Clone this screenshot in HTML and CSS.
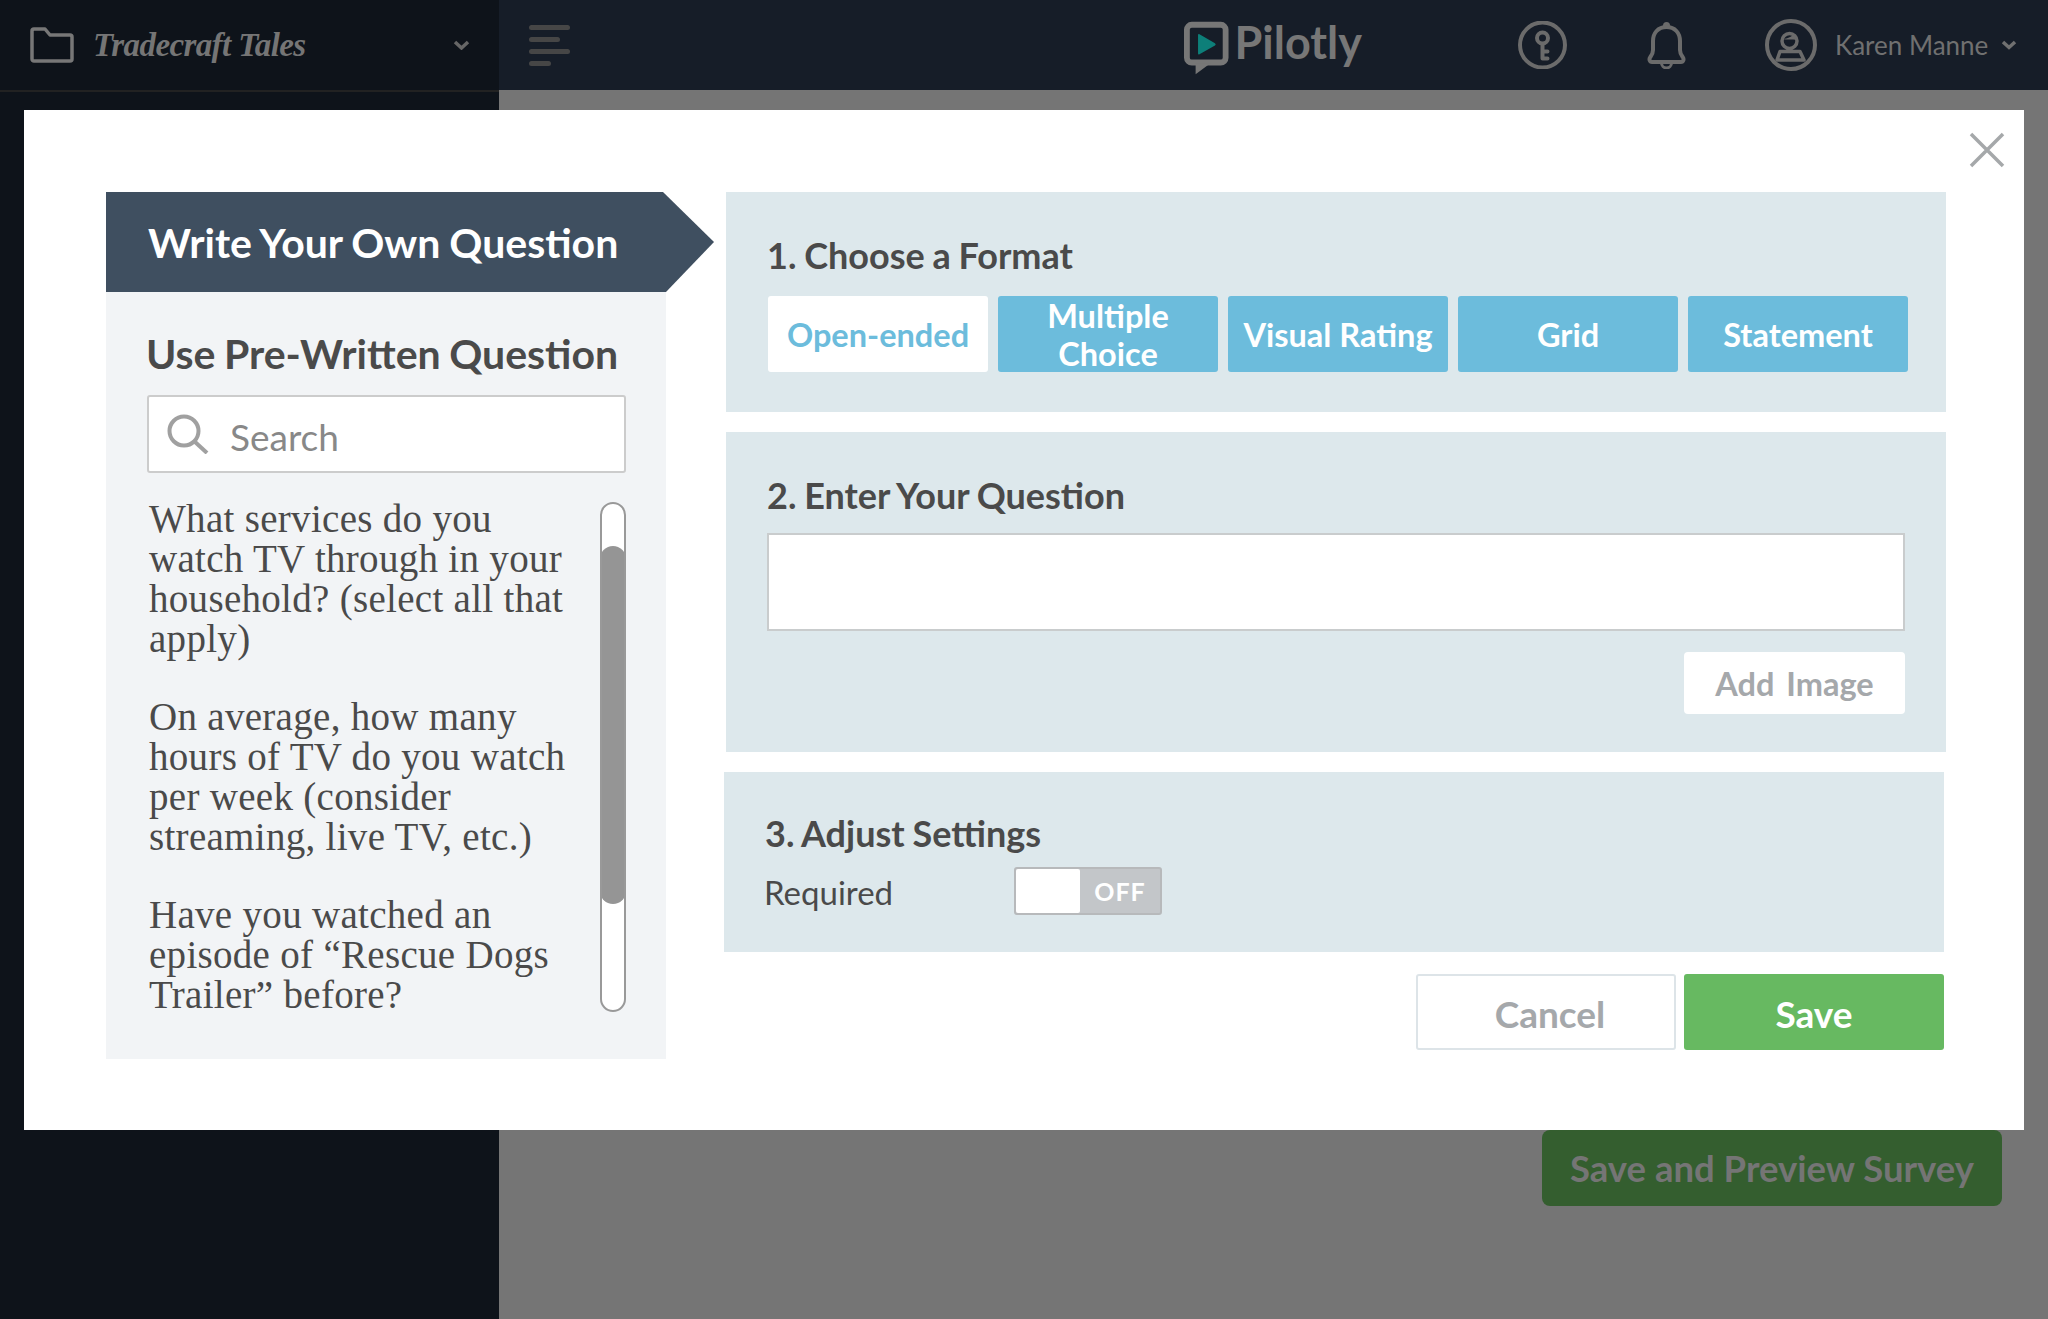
FILE: index.html
```html
<!doctype html>
<html>
<head>
  <meta charset="utf-8"/>
  <title>Pilotly</title>
  <link rel="stylesheet" href="styles.css">
</head>
<body>
  <div class="page">
    <aside class="sidebar">
      <div class="project">
        <svg class="folder" width="44" height="36" viewBox="0 0 44 36"><path d="M2 4a2 2 0 0 1 2-2h11l5 6h20a2 2 0 0 1 2 2v22a2 2 0 0 1-2 2H4a2 2 0 0 1-2-2z" fill="none" stroke="#777" stroke-width="3.500" stroke-linejoin="round"/></svg>
        <span class="project-name">Tradecraft Tales</span>
        <svg class="chevron" width="17" height="10" viewBox="0 0 17 10"><path d="M2 2l6.500 6L15 2" fill="none" stroke="#666" stroke-width="3.500"/></svg>
      </div>
    </aside>
    <div class="main">
      <header class="topbar">
        <div class="menu-icon"><i></i><i class="m2"></i><i></i><i class="m4"></i></div>
        <div class="logo">
          <svg width="46" height="54" viewBox="0 0 46 54"><path d="M8 3h30a5 5 0 0 1 5 5v29a5 5 0 0 1-5 5H8a5 5 0 0 1-5-5V8a5 5 0 0 1 5-5z" fill="none" stroke="#777" stroke-width="6"/><path d="M12 43v11l15-11z" fill="#777"/><path d="M14.500 13.500a1 1 0 0 1 1.500-.8L32 22a1.500 1.500 0 0 1 0 2.400L16 33.500a1 1 0 0 1-1.500-.8z" fill="#0d7f79"/></svg>
          <span class="logo-text">Pilotly</span>
        </div>
        <div class="top-right">
          <svg class="ic-key" width="50" height="48" viewBox="0 0 50 48"><circle cx="24.500" cy="24" r="22.500" fill="none" stroke="#6b6b6b" stroke-width="4"/><circle cx="24.500" cy="17" r="5.500" fill="none" stroke="#6b6b6b" stroke-width="4"/><path d="M24.500 23v14.500h5M24.500 30.500h5" fill="none" stroke="#6b6b6b" stroke-width="4" stroke-linecap="round" stroke-linejoin="round"/></svg>
          <svg class="ic-bell" width="40" height="48" viewBox="0 0 40 48"><path d="M19.500 6C11 6 6 12 6 20v9c0 4-2 6-3 7.500S2.500 41 5 41h29c2.500 0 3-3 2-4.500S33 33 33 29v-9C33 12 28 6 19.500 6z" fill="none" stroke="#6b6b6b" stroke-width="4" stroke-linejoin="round"/><circle cx="19.500" cy="4.500" r="3.500" fill="#6b6b6b"/><path d="M14.500 42a5 5 0 0 0 10 0" fill="none" stroke="#6b6b6b" stroke-width="3"/></svg>
          <svg class="ic-user" width="52" height="52" viewBox="0 0 52 52"><circle cx="26" cy="26" r="24" fill="none" stroke="#6b6b6b" stroke-width="4"/><circle cx="24.500" cy="22" r="7.500" fill="none" stroke="#6b6b6b" stroke-width="3.500"/><path d="M17 20c3 0 9-1 11.500-5 2 1 3.500 3 3.500 6-5-1-10 0-15-1z" fill="#6b6b6b"/><path d="M15 32.500h20L39 41H12z" fill="none" stroke="#6b6b6b" stroke-width="3.500" stroke-linejoin="round"/></svg>
          <span class="user-name">Karen Manne</span>
          <svg class="chevron" width="16" height="10" viewBox="0 0 16 10"><path d="M2 2l6 5.500L14 2" fill="none" stroke="#707070" stroke-width="3.500"/></svg>
        </div>
      </header>
      <div class="content">
        <div class="preview-btn">Save and Preview Survey</div>
      </div>
    </div>
  </div>

  <div class="modal">
    <svg class="close" width="36" height="36" viewBox="0 0 36 36"><path d="M2 2l32 32M34 2L2 34" fill="none" stroke="#a5a8aa" stroke-width="3.500"/></svg>
    <div class="left-col">
      <div class="banner">Write Your Own Question</div>
      <div class="library">
        <h2 class="library-title">Use Pre-Written Question</h2>
        <div class="search">
          <svg width="42" height="40" viewBox="0 0 42 40"><circle cx="17" cy="17" r="14.500" fill="none" stroke="#a0a0a0" stroke-width="4"/><path d="M27 27l13 12" fill="none" stroke="#a0a0a0" stroke-width="4"/></svg>
          <span>Search</span>
        </div>
        <div class="list-wrap">
          <div class="question-list">
            <p>What services do you watch TV through in your household? (select all that apply)</p>
            <p>On average, how many hours of TV do you watch per week (consider streaming, live TV, etc.)</p>
            <p>Have you watched an episode of “Rescue Dogs Trailer” before?</p>
          </div>
          <div class="scrollbar"><div class="thumb"></div></div>
        </div>
      </div>
    </div>
    <div class="right-col">
      <section class="step step-format">
        <h3>1. Choose a Format</h3>
        <div class="formats">
          <div class="format active">Open-ended</div>
          <div class="format">Multiple Choice</div>
          <div class="format">Visual Rating</div>
          <div class="format">Grid</div>
          <div class="format">Statement</div>
        </div>
      </section>
      <section class="step step-question">
        <h3>2. Enter Your Question</h3>
        <div class="question-input"></div>
        <div class="add-image">Add Image</div>
      </section>
      <section class="step step-settings">
        <h3>3. Adjust Settings</h3>
        <div class="setting">
          <span class="setting-label">Required</span>
          <div class="toggle"><div class="knob"></div><div class="toggle-off">OFF</div></div>
        </div>
      </section>
      <div class="actions">
        <div class="btn btn-cancel">Cancel</div>
        <div class="btn btn-save">Save</div>
      </div>
    </div>
  </div>
</body>
</html>
```

FILE: styles.css
```css
html, body {
  margin: 0;
  width: 100%;
  height: 100%;
  overflow: hidden;
  font-family: "Lato", "Liberation Sans", sans-serif;
  color: #4a4a4a;
}
h2, h3, p {
  margin: 0;
}
.page {
  display: flex;
  height: 1319px;
}
.sidebar {
  width: 499px;
  flex: none;
  background: #0e131a;
}
.project {
  height: 90px;
  border-bottom: 2px solid #222;
  padding: 0 29px 0 30px;
  display: flex;
  align-items: center;
}
.project-name {
  margin-left: 19px;
  flex: 1;
  font-family: "Liberation Serif", serif;
  font-style: italic;
  font-weight: 700;
  font-size: 33px;
  letter-spacing: -.6px;
  color: #757575;
}
.main {
  flex: 1;
  display: flex;
  flex-direction: column;
  background: #757575;
}
.topbar {
  height: 90px;
  flex: none;
  background: #161d28;
  display: flex;
  align-items: center;
  padding-left: 30px;
}
.menu-icon {
  width: 41px;
  display: flex;
  flex-direction: column;
  gap: 7px;
}
.menu-icon i {
  display: block;
  height: 5px;
  width: 41px;
  border-radius: 3px;
  background: #464646;
}
.menu-icon .m2 {
  width: 31px;
}
.menu-icon .m4 {
  width: 22px;
}
.logo {
  margin-left: 614px;
  width: 178px;
  flex: none;
  display: flex;
  align-items: center;
  gap: 6px;
}
.logo svg {
  margin-top: 5px;
}
.logo-text {
  font-size: 45px;
  font-weight: 700;
  color: #777;
  margin-top: -6px;
}
.top-right {
  margin-left: 156px;
  display: flex;
  align-items: center;
}
.ic-bell {
  margin-left: 79px;
}
.ic-user {
  margin-left: 78px;
}
.user-name {
  margin-left: 18px;
  font-size: 26px;
  color: #707070;
}
.top-right .chevron {
  margin-left: 13px;
}
.content {
  flex: 1;
  padding: 1040px 46px 0 0;
  display: flex;
  justify-content: flex-end;
  align-items: flex-start;
}
.preview-btn {
  width: 460px;
  height: 76px;
  line-height: 76px;
  text-align: center;
  background: #345e2f;
  border-radius: 8px;
  font-size: 36.500px;
  font-weight: 700;
  color: #757575;
}

.modal {
  position: absolute;
  left: 24px;
  top: 110px;
  width: 2000px;
  height: 1020px;
  box-sizing: border-box;
  padding: 82px 78px 0 82px;
  background: #fff;
  display: flex;
  gap: 60px;
}
.close {
  position: absolute;
  right: 19px;
  top: 22px;
}
.left-col {
  width: 560px;
  flex: none;
}
.banner {
  width: 608px;
  height: 100px;
  line-height: 102px;
  padding-left: 42px;
  box-sizing: border-box;
  background: #3f4f60;
  color: #fff;
  font-size: 41px;
  font-weight: 700;
  word-spacing: -1px;
  clip-path: polygon(0 0, 557px 0, 100% 50%, 560px 100%, 0 100%);
}
.library {
  height: 767px;
  box-sizing: border-box;
  padding: 37px 40px 0 41px;
  background: #f2f4f6;
}
.library-title {
  margin-left: -1px;
  font-size: 41px;
  font-weight: 700;
  word-spacing: -1.500px;
  line-height: 50px;
  color: #4a4a4a;
}
.search {
  margin-top: 16px;
  height: 78px;
  box-sizing: border-box;
  border: 2px solid #ccc;
  border-radius: 3px;
  background: #fff;
  display: flex;
  align-items: center;
  gap: 21px;
  padding-left: 18px;
  font-size: 37px;
  color: #888;
}
.search span {
  padding-top: 5px;
}
.list-wrap {
  margin-top: 26px;
  display: flex;
  justify-content: space-between;
}
.question-list {
  width: 432px;
  padding-left: 2px;
  font-family: "Liberation Serif", serif;
  font-size: 39px;
  line-height: 40px;
  letter-spacing: .3px;
  color: #4a4a4a;
}
.question-list p {
  margin-bottom: 38px;
}
.scrollbar {
  width: 26px;
  height: 510px;
  margin-top: 3px;
  box-sizing: border-box;
  border: 2px solid #999;
  border-radius: 13px;
  background: #fff;
  padding-top: 42px;
  overflow: hidden;
}
.thumb {
  margin: 0 -2px;
  height: 358px;
  border-radius: 13px;
  background: #959595;
}
.right-col {
  flex: 1;
  display: flex;
  flex-direction: column;
}
.step {
  background: #dde8ec;
  padding-left: 41px;
}
.step h3 {
  font-size: 36px;
  font-weight: 700;
  word-spacing: -1px;
  line-height: 44px;
  color: #4a4a4a;
}
.step-format {
  height: 220px;
  box-sizing: border-box;
  padding-top: 41px;
}
.formats {
  margin: 19px 0 0 1px;
  display: flex;
  gap: 10px;
}
.format {
  width: 220px;
  height: 76px;
  box-sizing: border-box;
  padding: 1px 10px 0;
  display: flex;
  align-items: center;
  justify-content: center;
  text-align: center;
  background: #6cbcdc;
  border-radius: 3px;
  color: #fff;
  font-size: 32.500px;
  font-weight: 700;
  line-height: 38px;
}
.format.active {
  background: #fff;
  color: #6cbcdc;
}
.step-question {
  margin-top: 20px;
  height: 320px;
  box-sizing: border-box;
  padding-top: 41px;
}
.question-input {
  margin-top: 16px;
  width: 1138px;
  height: 98px;
  box-sizing: border-box;
  border: 2px solid #c9cccd;
  background: #fff;
}
.add-image {
  margin: 21px 0 0 917px;
  width: 221px;
  height: 62px;
  line-height: 64px;
  text-align: center;
  background: #fff;
  border-radius: 4px;
  font-size: 32.500px;
  font-weight: 700;
  word-spacing: 4px;
  color: #a5a8ab;
}
.step-settings {
  margin: 20px 0 0 -2px;
  width: 1220px;
  height: 180px;
  box-sizing: border-box;
  padding-top: 39px;
}
.setting {
  margin-top: 12px;
  margin-left: -1px;
  display: flex;
  align-items: center;
}
.setting-label {
  width: 250px;
  padding-top: 2px;
  font-size: 33px;
  color: #4a4a4a;
}
.toggle {
  width: 148px;
  height: 48px;
  box-sizing: border-box;
  border: 2px solid #b7b9bb;
  border-radius: 3px;
  background: #c3c6c9;
  display: flex;
}
.knob {
  width: 64px;
  background: #fff;
  border-radius: 2px;
}
.toggle-off {
  flex: 1;
  text-align: center;
  line-height: 44px;
  font-size: 25px;
  font-weight: 700;
  letter-spacing: 1px;
  color: #fff;
}
.actions {
  margin-top: 22px;
  width: 1218px;
  display: flex;
  justify-content: flex-end;
  gap: 8px;
}
.btn {
  width: 260px;
  height: 76px;
  box-sizing: border-box;
  display: flex;
  align-items: center;
  justify-content: center;
  border-radius: 3px;
  font-size: 37px;
  font-weight: 700;
}
.btn-cancel {
  border: 2px solid #dde4e8;
  padding: 3px 0 0 8px;
  color: #a5a8ab;
}
.btn-save {
  padding-top: 2px;
  background: #67b961;
  color: #fff;
}
```
